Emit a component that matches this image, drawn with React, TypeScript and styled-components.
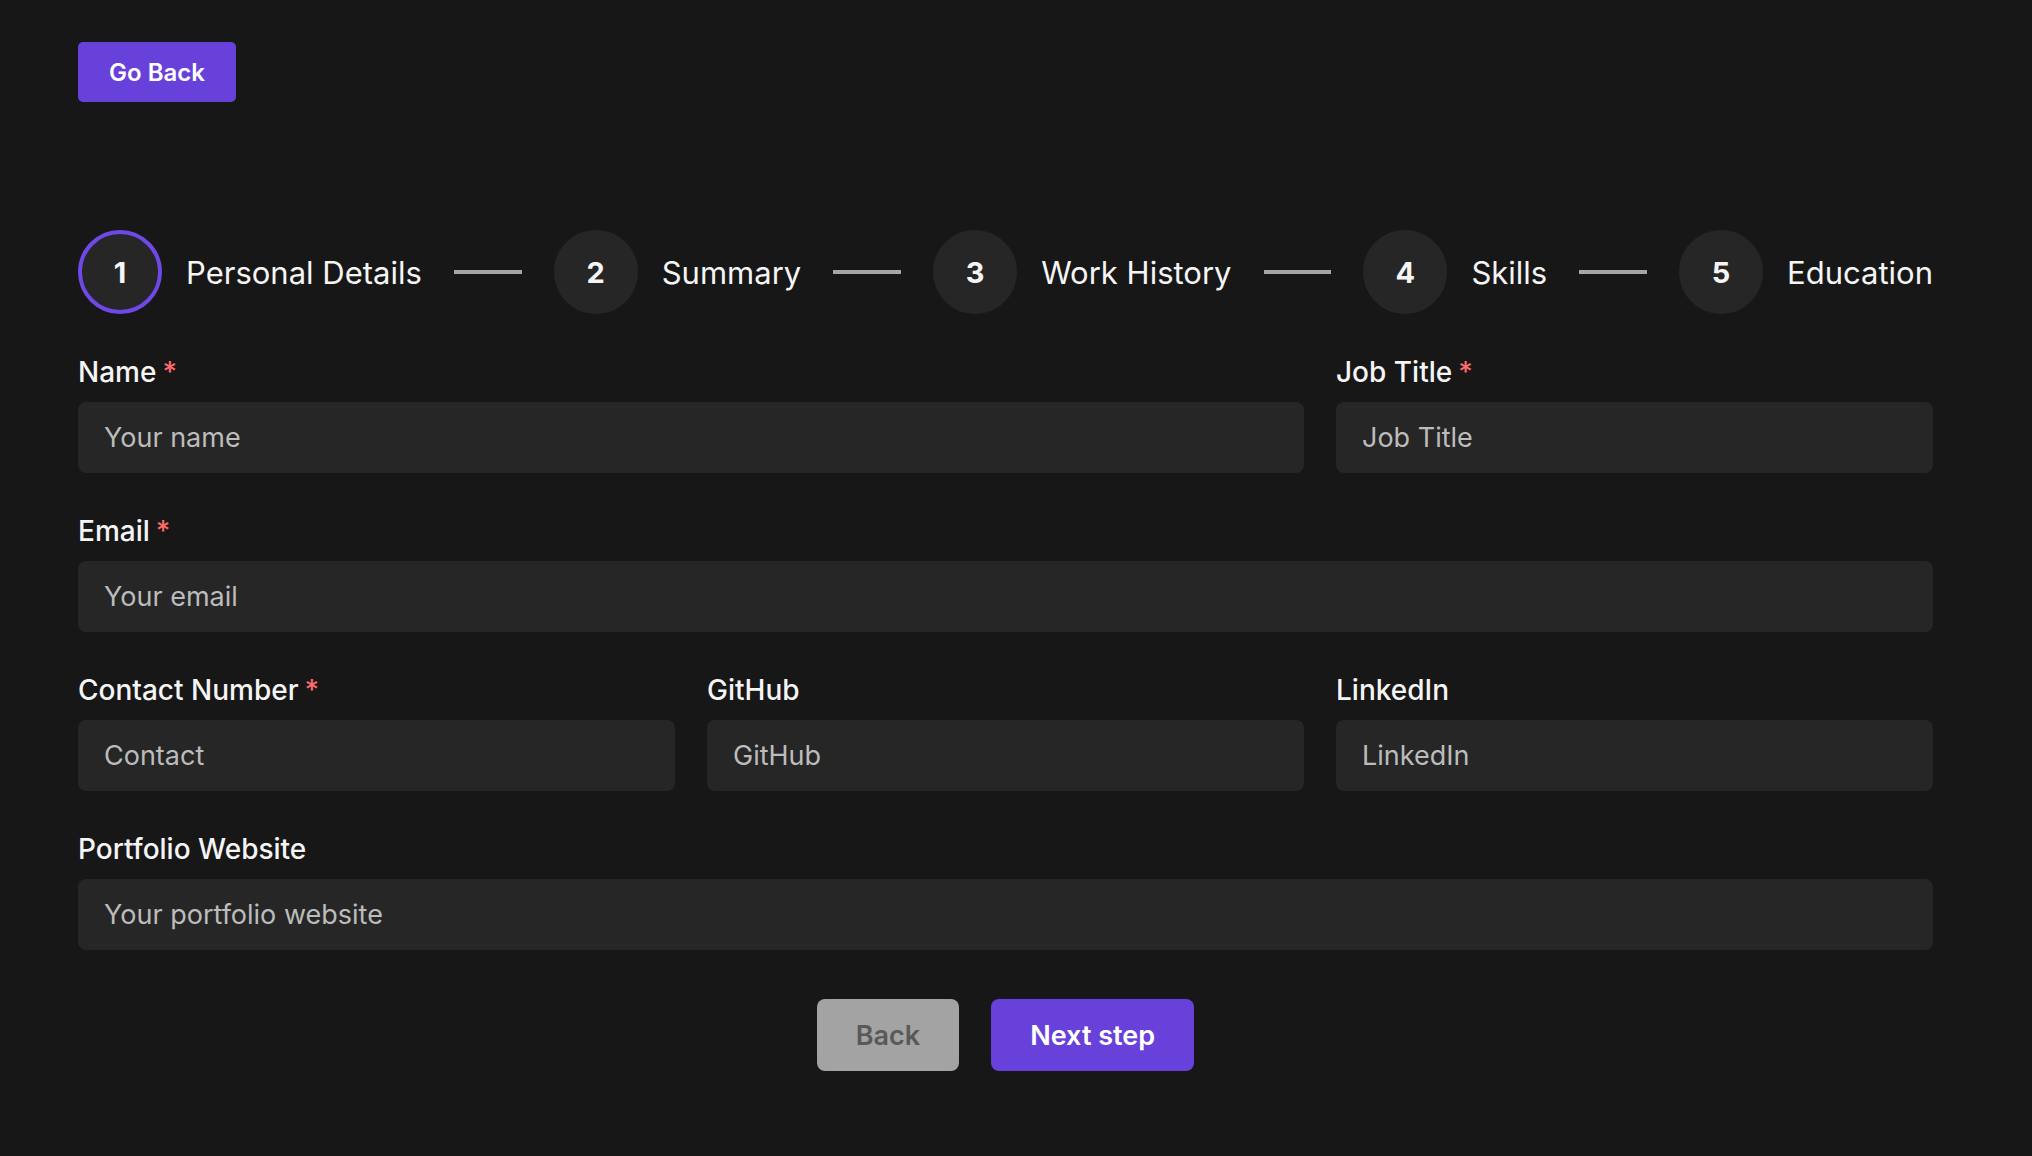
import React from "react";
import styled, { createGlobalStyle } from "styled-components";

const Global = createGlobalStyle`
  html, body {
    margin: 0;
    padding: 0;
    background: #171717;
    font-family: Inter, "Noto Sans", "Liberation Sans", sans-serif;
    color: #f2f2f2;
  }
  * { box-sizing: border-box; }
`;

const Page = styled.div`
  padding: 42px 99px 60px 78px;
  min-height: 1156px;
`;

const PrimaryButton = styled.button<{ $size?: "sm" | "lg" }>`
  border: none;
  border-radius: ${(p) => (p.$size === "sm" ? "5px" : "8px")};
  background: #6741d9;
  color: #ffffff;
  font-family: inherit;
  font-weight: 600;
  font-size: ${(p) => (p.$size === "sm" ? "24px" : "27px")};
  height: ${(p) => (p.$size === "sm" ? "60px" : "72px")};
  padding: 0 ${(p) => (p.$size === "sm" ? "31px" : "39px")};
  cursor: pointer;
`;

const GrayButton = styled.button`
  border: none;
  border-radius: 8px;
  background: #a3a3a3;
  color: #595959;
  font-family: inherit;
  font-weight: 600;
  font-size: 27px;
  height: 72px;
  padding: 0 39px;
`;

const Stepper = styled.div`
  display: flex;
  align-items: center;
  margin-top: 128px;
  height: 84px;
`;

const Step = styled.div`
  display: flex;
  align-items: center;
  gap: 24px;
`;

const StepIcon = styled.div<{ $active?: boolean }>`
  width: 84px;
  height: 84px;
  border-radius: 50%;
  background: #262626;
  border: 4px solid ${(p) => (p.$active ? "#7048e8" : "#262626")};
  display: flex;
  align-items: center;
  justify-content: center;
  font-weight: 700;
  font-size: 29px;
  color: #f5f5f5;
`;

const StepLabel = styled.span`
  font-size: 31px;
  font-weight: 400;
  color: #f5f5f5;
  white-space: nowrap;
`;

const Separator = styled.div`
  flex: 1;
  height: 4px;
  background: #a6a6a6;
  margin: 0 32px;
`;

const Form = styled.div`
  margin-top: 36px;
  display: grid;
  grid-template-columns: repeat(12, 1fr);
  column-gap: 32px;
  row-gap: 36px;
`;

const Field = styled.div<{ $span: number }>`
  grid-column: span ${(p) => p.$span};
  display: flex;
  flex-direction: column;
`;

const Label = styled.label`
  font-size: 28px;
  font-weight: 500;
  line-height: 44px;
  margin-bottom: 8px;
  color: #f5f5f5;
`;

const Required = styled.span`
  color: #ff6b6b;
  margin-left: 6px;
`;

const Input = styled.input`
  height: 71px;
  width: 100%;
  background: #262626;
  border: none;
  border-radius: 8px;
  padding: 0 26px;
  font-family: inherit;
  font-size: 27px;
  color: #e0e0e0;
  outline: none;
  &::placeholder {
    color: #bcbcbc;
  }
`;

const Actions = styled.div`
  margin-top: 49px;
  display: flex;
  justify-content: center;
  gap: 32px;
`;

const steps = ["Personal Details", "Summary", "Work History", "Skills", "Education"];

const fields: { label: string; placeholder: string; span: number; required?: boolean }[] = [
  { label: "Name", placeholder: "Your name", span: 8, required: true },
  { label: "Job Title", placeholder: "Job Title", span: 4, required: true },
  { label: "Email", placeholder: "Your email", span: 12, required: true },
  { label: "Contact Number", placeholder: "Contact", span: 4, required: true },
  { label: "GitHub", placeholder: "GitHub", span: 4 },
  { label: "LinkedIn", placeholder: "LinkedIn", span: 4 },
  { label: "Portfolio Website", placeholder: "Your portfolio website", span: 12 },
];

export default function App() {
  return (
    <>
      <Global />
      <Page>
        <PrimaryButton $size="sm">Go Back</PrimaryButton>
        <Stepper>
          {steps.map((s, i) => (
            <React.Fragment key={s}>
              <Step>
                <StepIcon $active={i === 0}>{i + 1}</StepIcon>
                <StepLabel>{s}</StepLabel>
              </Step>
              {i < steps.length - 1 && <Separator />}
            </React.Fragment>
          ))}
        </Stepper>
        <Form>
          {fields.map((f) => (
            <Field key={f.label} $span={f.span}>
              <Label>
                {f.label}
                {f.required && <Required>*</Required>}
              </Label>
              <Input placeholder={f.placeholder} />
            </Field>
          ))}
        </Form>
        <Actions>
          <GrayButton>Back</GrayButton>
          <PrimaryButton>Next step</PrimaryButton>
        </Actions>
      </Page>
    </>
  );
}
